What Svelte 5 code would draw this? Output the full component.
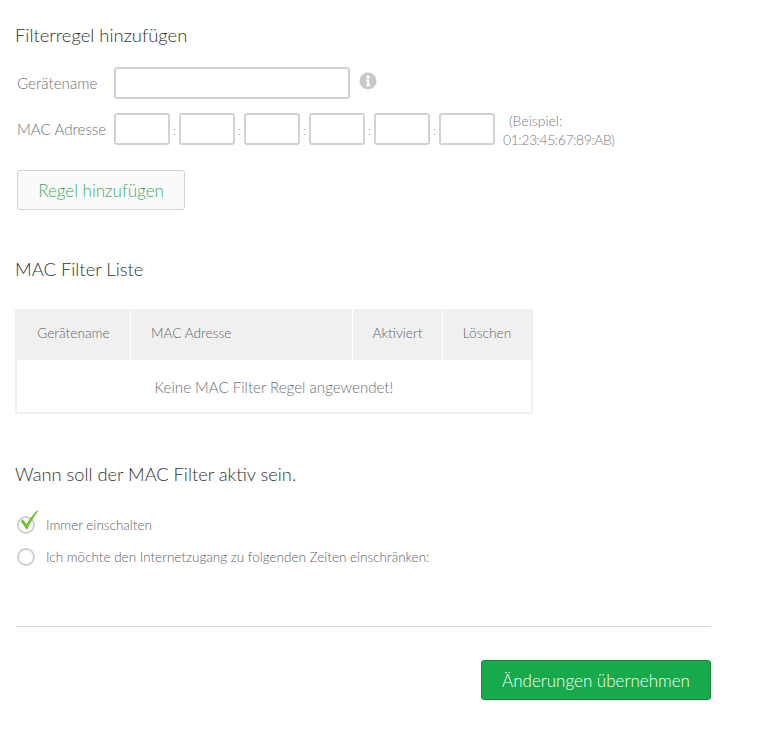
<script>
  const macFields = [0, 1, 2, 3, 4, 5];
</script>

<main class="page">
  <h2 class="title first">Filterregel hinzufügen</h2>
  <div class="row name-row">
    <label class="label" for="name">Gerätename</label>
    <input id="name" class="field name" type="text" />
    <svg class="info" width="18" height="18" viewBox="0 0 18 18" aria-hidden="true">
      <circle cx="9" cy="9" r="8.5" fill="#c8c8c8" />
      <circle cx="9" cy="5" r="1.7" fill="#fff" />
      <path d="M6.9 7.6h3.3v5.2h1.1v1.5H6.9v-1.5h1.1V9.1H6.9z" fill="#fff" />
    </svg>
  </div>
  <div class="row mac-row">
    <span class="label">MAC Adresse</span>
    <div class="mac">
      {#each macFields as f, i}
        {#if i > 0}<span class="sep">:</span>{/if}
        <input class="field octet" type="text" aria-label="MAC {f + 1}" />
      {/each}
    </div>
    <p class="hint"><span class="hint-first">(Beispiel:</span><br /><span class="hint-second">01:23:45:67:89:AB)</span></p>
  </div>
  <button class="add" type="button">Regel hinzufügen</button>

  <h2 class="title list-title">MAC Filter Liste</h2>
  <table>
    <thead>
      <tr>
        <th class="c1">Gerätename</th>
        <th class="c2">MAC Adresse</th>
        <th class="c3">Aktiviert</th>
        <th class="c4">Löschen</th>
      </tr>
    </thead>
    <tbody>
      <tr><td colspan="4">Keine MAC Filter Regel angewendet!</td></tr>
    </tbody>
  </table>

  <h2 class="title when-title">Wann soll der MAC Filter aktiv sein.</h2>
  <div class="option checked">
    <span class="radio">
      <svg class="tick" width="24" height="24" viewBox="0 0 24 24" aria-hidden="true">
        <path d="M3.5 12.5 L6 10.5 L9.5 15 C12 10.5 15.5 6 20 1.5 L21 2.5 C17 7.5 13.5 13 10.5 20 L9 20 C7.5 17 5.5 14.5 3.5 12.5 Z" fill="#6cc52c" />
      </svg>
    </span>
    <span>Immer einschalten</span>
  </div>
  <div class="option second">
    <span class="radio"></span>
    <span>Ich möchte den Internetzugang zu folgenden Zeiten einschränken:</span>
  </div>

  <hr />
  <div class="actions">
    <button class="save" type="button">Änderungen übernehmen</button>
  </div>
</main>

<style>
  :global(body) {
    margin: 0;
    background: #fff;
  }
  .page {
    width: 780px;
    height: 735px;
    box-sizing: border-box;
    padding: 24px 0 0 15px;
    overflow: hidden;
    font-family: "Lato", "Open Sans", sans-serif;
    font-weight: 300;
    color: #6f7072;
  }
  .title {
    margin: 0;
    font-size: 18.4px;
    line-height: 22px;
    font-weight: 300;
    color: #2f3135;
  }
  .row {
    display: flex;
    align-items: flex-start;
    margin-left: 2px;
  }
  .name-row {
    margin-top: 21px;
    height: 32px;
  }
  .mac-row {
    margin-top: 14px;
    height: 46px;
  }
  .label {
    width: 98px;
    flex: none;
    margin-right: -1px;
    font-size: 15.2px;
    line-height: 32px;
    color: #717274;
  }
  .field {
    box-sizing: border-box;
    height: 32px;
    padding: 0;
    margin: 0;
    border: 2px solid #d2d2d2;
    border-radius: 3px;
    background: #fff;
    outline: none;
  }
  .name {
    width: 236px;
  }
  .info {
    margin: 5px 0 0 9px;
  }
  .mac {
    display: flex;
    width: 381px;
    flex: none;
  }
  .octet {
    width: 56px;
    flex: none;
  }
  .sep {
    width: 9px;
    flex: none;
    text-align: center;
    font-size: 12px;
    line-height: 36px;
    color: #888;
  }
  .hint {
    margin: -2px 0 0 8px;
    width: 130px;
    font-size: 14px;
    line-height: 19px;
    color: #7a7b7f;
    white-space: nowrap;
  }
  .hint-first {
    margin-left: 6px;
  }
  .hint-second {
    letter-spacing: -0.45px;
  }
  .add {
    display: block;
    box-sizing: border-box;
    margin: 11px 0 0 2px;
    width: 168px;
    height: 40px;
    padding: 0;
    border: 1px solid #d4d4d4;
    border-radius: 3px;
    background: #fafafa;
    font: inherit;
    font-size: 17px;
    color: #3fac5f;
  }
  .list-title {
    margin-top: 48px;
  }
  table {
    box-sizing: border-box;
    width: 518px;
    height: 105px;
    margin-top: 29px;
    border: 2px solid #f0f0f0;
    border-top: 0;
    border-collapse: separate;
    border-spacing: 0;
    table-layout: fixed;
  }
  th {
    height: 51px;
    padding: 0 0 5px;
    box-sizing: border-box;
    background: #f0f0f0;
    border-left: 1px solid #fff;
    font-size: 13.7px;
    font-weight: 300;
    color: #646568;
    text-align: center;
  }
  th:first-child {
    border-left: 0;
  }
  .c1 { width: 113px; }
  .c2 { width: 222px; text-align: left; padding-left: 20px; }
  .c3 { width: 90px; }
  td {
    padding: 1px 0 0;
    box-sizing: border-box;
    height: 52px;
    text-align: center;
    font-size: 15.1px;
    color: #6c6e72;
  }
  .when-title {
    margin-top: 49px;
    font-size: 18.25px;
  }
  .option {
    display: flex;
    align-items: center;
    height: 20px;
    margin-left: 2px;
    font-size: 13.5px;
    color: #5f6062;
  }
  .checked {
    margin-top: 30px;
  }
  .second {
    margin-top: 12px;
  }
  .radio {
    position: relative;
    box-sizing: border-box;
    flex: none;
    width: 18px;
    height: 18px;
    margin-right: 11px;
    border: 2px solid #cfcfcf;
    border-radius: 50%;
  }
  .tick {
    position: absolute;
    left: -2px;
    top: -9px;
  }
  hr {
    width: 695px;
    height: 1px;
    margin: 59px 0 0 1px;
    border: 0;
    background: #d6d6d6;
  }
  .actions {
    display: flex;
    justify-content: flex-end;
    width: 696px;
    margin-top: 33px;
  }
  .save {
    box-sizing: border-box;
    width: 230px;
    height: 40px;
    padding: 0;
    border: 1px solid #0e8c3c;
    border-radius: 3px;
    background: #16aa4a;
    font: inherit;
    font-size: 17px;
    color: #fff;
  }
</style>
